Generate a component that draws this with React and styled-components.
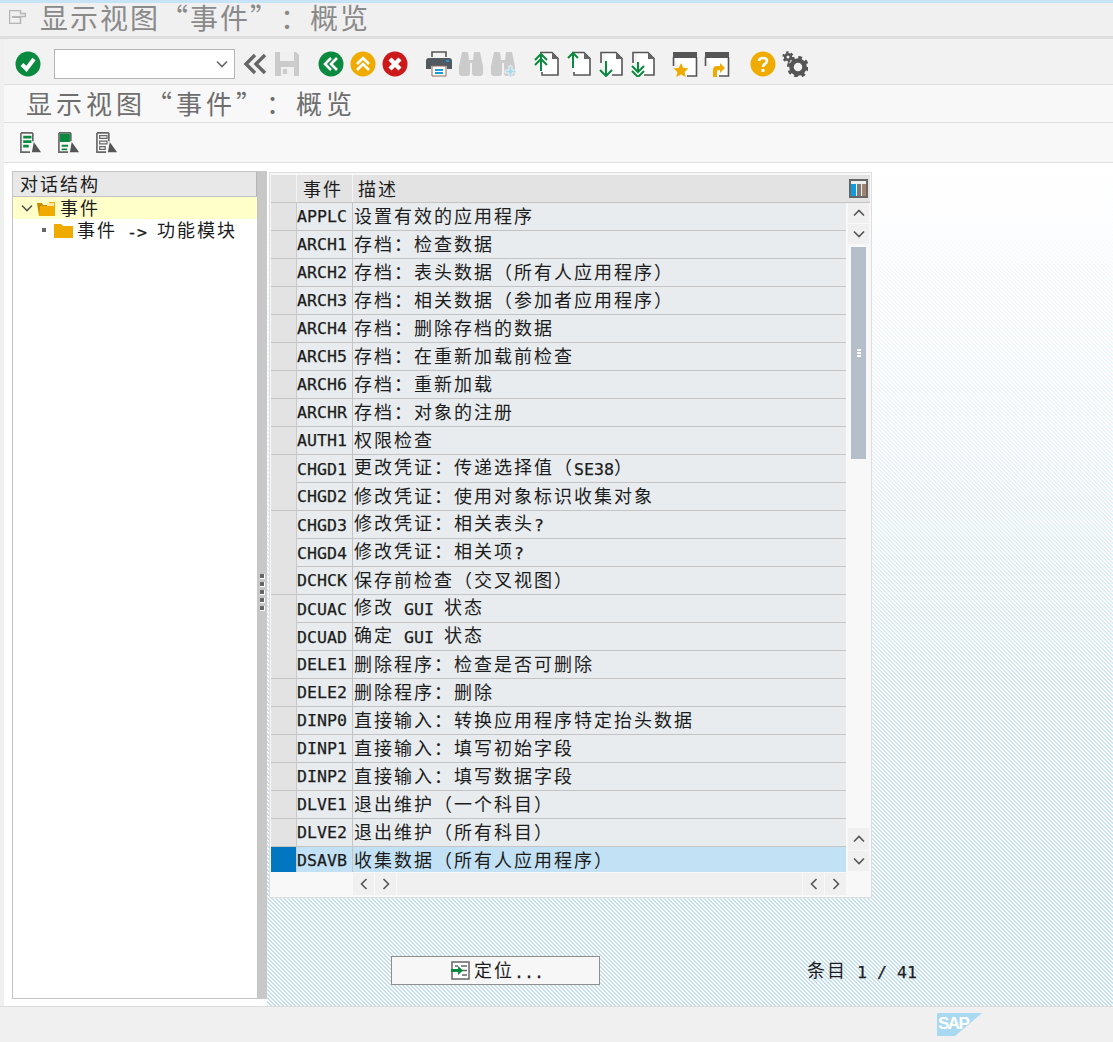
import React from 'react';
import styled, { createGlobalStyle } from 'styled-components';

const GlobalStyle = createGlobalStyle`
  *, *::before, *::after { box-sizing: border-box; }
  html, body { margin: 0; padding: 0; background: #f0f0f0; }
  body {
    font-family: "Noto Sans CJK SC", "Noto Sans", sans-serif;
    color: #1c1c1c;
    text-spacing-trim: space-all;
  }
`;

const Page = styled.div`
  width: 1113px;
  height: 1042px;
  display: flex;
  flex-direction: column;
  overflow: hidden;
  background: #f0f0f0;
`;

const TopStrip = styled.div`
  height: 3px;
  flex: none;
  background: #c6e4f6;
`;

const TitleBar = styled.div`
  height: 36px;
  flex: none;
  display: flex;
  align-items: center;
  padding: 0 0 6px 9px;
  gap: 14px;
  border-bottom: 3px solid #dedede;
`;

const BigTitle = styled.div`
  font-size: 28px;
  line-height: 26px;
  letter-spacing: 2px;
  color: #8a8a8a;
  white-space: pre;
`;

const Shell = styled.div`
  flex: 1;
  display: flex;
  flex-direction: column;
  margin-left: 4px;
  min-height: 0;
`;

const Toolbar = styled.div`
  height: 46px;
  flex: none;
  padding: 4px 0 0 8px;
  display: flex;
  align-items: center;
  border-bottom: 1px solid #dfdfdf;
  background: #f2f2f2;
`;

const ToolButton = styled.div`
  width: 32px;
  height: 32px;
  flex: none;
  display: flex;
  align-items: center;
  justify-content: center;
  margin-left: ${p => p.$gap || 0}px;
`;

const Combo = styled.div`
  width: 181px;
  height: 30px;
  flex: none;
  margin: 0 4px 0 10px;
  border: 1px solid #b5b5b5;
  background: #fff;
  display: flex;
  align-items: center;
  justify-content: flex-end;
  padding-right: 6px;
`;

const ScreenTitle = styled.div`
  height: 38px;
  flex: none;
  padding-left: 22px;
  font-size: 26px;
  line-height: 36px;
  letter-spacing: 4px;
  color: #6e6e6e;
  background: #f8f8f8;
  border-bottom: 1px solid #dfdfdf;
  white-space: pre;
`;

const AppToolbar = styled.div`
  height: 40px;
  flex: none;
  display: flex;
  align-items: center;
  padding-left: 16px;
  gap: 16px;
  background: #f8f8f8;
  border-bottom: 1px solid #dfdfdf;
`;

const Body = styled.div`
  flex: 1;
  display: flex;
  min-height: 0;
  background: #fff;
`;

const LeftColumn = styled.div`
  width: 263px;
  flex: none;
  padding: 8px 0 7px 8px;
  display: flex;
`;

const TreePanel = styled.div`
  width: 246px;
  border: 1px solid #c4c4c4;
  background: #fff;
`;

const TreeHeader = styled.div`
  height: 25px;
  padding: 0 0 2px 7px;
  display: flex;
  align-items: center;
  background: #e8e8e8;
  border-bottom: 1px solid #c4c4c4;
  border-right: 1px solid #b8b8b8;
`;

const TreeRow = styled.div`
  height: 22px;
  display: flex;
  align-items: center;
  padding-left: ${p => p.$indent}px;
  background: ${p => (p.$active ? '#ffffc9' : 'transparent')};
  gap: ${p => p.$gap || 0}px;
`;

const FolderSlot = styled.span`
  display: flex;
  margin-right: ${p => p.$space}px;
`;

const TreeLabel = styled.span`
  padding: ${p => (p.$raised ? '0 0 2px' : '1px 0 0')};
`;

const Splitter = styled.div`
  width: 9px;
  background: #c8c8c8;
  display: flex;
  flex-direction: column;
  align-items: center;
  justify-content: center;
  gap: 3px;
  padding-top: 14px;
`;

const GripDot = styled.span`
  width: 5px;
  height: 5px;
  background: #666;
  border: solid #fff;
  border-width: 0 1px 1px 0;
`;

const RightColumn = styled.div`
  flex: 1;
  padding: 9px 0 0 5px;
  display: flex;
  flex-direction: column;
  background:
    linear-gradient(to bottom, rgba(255,255,255,1) 0, rgba(255,255,255,.55) 40%, rgba(255,255,255,.2) 64%, rgba(255,255,255,0) 87%),
    linear-gradient(45deg, #c3dff2 25%, #fff 25%, #fff 50%, #c3dff2 50%, #c3dff2 75%, #fff 75%) 0 0 / 4px 4px;
`;

const TablePanel = styled.div`
  width: 603px;
  height: 726px;
  flex: none;
  margin-left: -3px;
  background: #f8f8f8;
  border: 1px solid #dedede;
  padding: 2px 1px 0 1px;
  display: flex;
  flex-direction: column;
`;

const HeaderRow = styled.div`
  height: 28px;
  flex: none;
  display: grid;
  grid-template-columns: 26px 56px 1fr 24px;
  background: #e3e3e3;
  border-bottom: 1px solid #c4c4c4;
`;

const HeaderCell = styled.div`
  display: flex;
  align-items: center;
  padding-left: ${p => p.$pad || 0}px;
  border-right: ${p => (p.$plain ? '0' : '1px solid #f4f4f4')};
`;

const TableMiddle = styled.div`
  flex: none;
  height: 669px;
  display: flex;
`;

const Rows = styled.div`
  width: 575px;
  flex: none;
  overflow: hidden;
`;

const Row = styled.div`
  height: 28px;
  display: grid;
  grid-template-columns: 26px 56px 1fr;
  background: ${p => (p.$selected ? '#c3e1f4' : '#e8ecef')};
  border-bottom: 1px solid ${p => (p.$selected ? '#c3e1f4' : '#c4c4c4')};
`;

const Selector = styled.div`
  background: ${p => (p.$selected ? '#0077c0' : '#e3e3e3')};
  border-right: 1px solid #c9c9c9;
`;

const KeyCell = styled.div`
  padding-bottom: 2px;
  display: flex;
  align-items: center;
  border-right: 1px solid #c4c4c4;
`;

const DescCell = styled.div`
  padding: 0 0 2px 1px;
  display: flex;
  align-items: center;
`;

const VScroll = styled.div`
  width: 21px;
  margin-left: 2px;
  display: flex;
  flex-direction: column;
`;

const ScrollButton = styled.div`
  width: 21px;
  height: ${p => p.$h || 20}px;
  flex: none;
  margin-bottom: 1px;
  background: #f0f0f0;
  display: flex;
  align-items: center;
  justify-content: center;
`;

const ScrollTrack = styled.div`
  flex: 1;
  padding: 2px 3px 0 3px;
`;

const ScrollThumb = styled.div`
  height: 212px;
  background: #b5bfc9;
  display: flex;
  align-items: center;
  justify-content: center;
`;

const ThumbGrip = styled.span`
  width: 4px;
  height: 8px;
  background: repeating-linear-gradient(to bottom, #fff 0, #fff 2px, #b5bfc9 2px, #b5bfc9 3px);
`;

const HScroll = styled.div`
  flex: none;
  height: 22px;
  margin: 1px 0 0 82px;
  width: 493px;
  display: flex;
  gap: 1px;
`;

const HTrack = styled.div`
  flex: 1;
  background: #f0f0f0;
`;

const BottomRow = styled.div`
  margin: 58px 0 0 119px;
  display: flex;
  align-items: center;
`;

const PositionButton = styled.div`
  width: 209px;
  height: 29px;
  flex: none;
  background: #f7f7f7;
  border: 1px solid #8f8f8f;
  display: flex;
  align-items: center;
  justify-content: center;
  gap: 4px;
  padding-left: 4px;
`;

const EntryInfo = styled.div`
  margin: 0 0 0 207px;
  display: flex;
  align-items: center;
`;

const Footer = styled.div`
  height: 36px;
  flex: none;
  border-top: 1px solid #dcdcdc;
  background: #f0f0f0;
  display: flex;
  padding: 6px 0 0 937px;
  margin-left: -4px;
`;

const Logo = styled.div`
  position: relative;
  width: 45px;
  height: 23px;
  color: #fff;
  font-family: "Liberation Sans", Arial, sans-serif;
  font-weight: 700;
  font-size: 17px;
  line-height: 21px;
  letter-spacing: -1.5px;
  padding-left: 1px;

  &::before {
    content: '';
    position: absolute;
    inset: 0;
    z-index: 0;
    background: #a9d9f0;
    clip-path: polygon(0 0, 100% 0, 40% 100%, 0 100%);
  }
`;

const LogoText = styled.span`
  position: relative;
  z-index: 1;
`;

const Line = styled.span`
  display: block;
  white-space: pre;
  line-height: 22px;
`;

const Han = styled.span`
  font-family: "Noto Sans CJK SC", sans-serif;
  font-size: 18px;
  letter-spacing: 2px;
`;

const Latin = styled.span`
  font-family: "DejaVu Sans Mono", monospace;
  font-size: 16.6px;
  -webkit-text-stroke: 0.25px currentColor;
  vertical-align: -1px;
`;

// half width runs sit on a 10px grid, full width runs on a 20px grid, like the SAP GUI font
const Text = ({ children }) => (
  <Line>
    {children.split(/([\x00-\x7f]+)/).filter(Boolean).map((part, i) =>
      /^[\x00-\x7f]/.test(part) ? <Latin key={i}>{part}</Latin> : <Han key={i}>{part}</Han>
    )}
  </Line>
);

const Circle = ({ fill, children }) => (
  <svg width="26" height="26" viewBox="0 0 26 26">
    <circle cx="13" cy="13" r="12.5" fill={fill} />
    {children}
  </svg>
);

const CheckIcon = () => (
  <Circle fill="#0a8a3e">
    <path d="M7 13.500l4.500 4.500L19 8" fill="none" stroke="#fff" strokeWidth="4" />
  </Circle>
);

const BackIcon = () => (
  <svg width="24" height="24" viewBox="0 0 24 24">
    <path d="M12 3L3 12l9 9M22 3l-9 9 9 9" fill="none" stroke="#666" strokeWidth="3.4" />
  </svg>
);

const SaveIcon = () => (
  <svg width="26" height="26" viewBox="0 0 26 26">
    <path d="M1 1h21l3 3v21H1z" fill="#cbcbcb" />
    <path d="M6 1h14v9H6z" fill="#f0f0f0" />
    <path d="M7 16h13v9H7z" fill="#f0f0f0" />
    <path d="M9 18h4v5H9z" fill="#cbcbcb" />
  </svg>
);

const LeftDouble = () => (
  <Circle fill="#0a8a3e">
    <path d="M13 7l-6 6 6 6M19 7l-6 6 6 6" fill="none" stroke="#fff" strokeWidth="2.6" />
  </Circle>
);

const UpDouble = () => (
  <Circle fill="#f0ab00">
    <path d="M7 13l6-6 6 6M7 19l6-6 6 6" fill="none" stroke="#fff" strokeWidth="2.6" />
  </Circle>
);

const CancelIcon = () => (
  <Circle fill="#cc1919">
    <path d="M8 8l10 10M18 8L8 18" fill="none" stroke="#fff" strokeWidth="4.4" />
  </Circle>
);

const PrintIcon = () => (
  <svg width="26" height="26" viewBox="0 0 26 26">
    <path d="M6 6V1h14v5" fill="none" stroke="#555" strokeWidth="1.6" />
    <path d="M0 10q0-3 3-3h20q3 0 3 3v8h-5v-3H5v3H0z" fill="#505a60" />
    <path d="M20 9h3v2h-3z" fill="#1b9ad6" />
    <path d="M6 15h14v10H6z" fill="#fff" stroke="#8a6a5a" />
    <path d="M9 18h8v2H9zM9 21h8v2H9z" fill="#1b9ad6" />
  </svg>
);

const FindIcon = ({ plus }) => (
  <svg width="26" height="26" viewBox="0 0 26 26">
    <path d="M4 1h6l1 8h4l1-8h6l3 14v7q0 3-3 3h-5q-3 0-3-3V12h-2v10q0 3-3 3H4q-3 0-3-3v-7z" fill="#cbcbcb" />
    {plus && <path d="M19 15h3v4h4v3h-4v4h-3v-4h-4v-3h4z" fill="#a9d9f0" stroke="#f2f2f2" strokeWidth="1" />}
  </svg>
);

const pageArrows = {
  first: 'M7 20V4M1 9l6-6 6 6M1 14l6-6 6 6',
  prev: 'M7 17V2M2 7l5-5 5 5',
  next: 'M8 10v15M2 19l6 6 6-6',
  last: 'M8 11v9M2 15l6 6 6-6M2 20l6 6 6-6',
};

const PageIcon = ({ arrow }) => {
  const goesUp = arrow === 'first' || arrow === 'prev';
  return (
    <svg width="26" height="26" viewBox="0 0 26 26">
      <path d="M5 2h13l6 6v16H7V2z" fill="#fff" />
      <path
        d={goesUp ? 'M6 1.500h12l6 6v16.500H8v-3' : 'M3 12V1.500h15l6 6v16.500H14'}
        fill="none"
        stroke="#555"
        strokeWidth="1.6"
      />
      <path d="M18 1l6 7h-6z" fill="#666" />
      <path d={pageArrows[arrow]} fill="none" stroke="#0a8a3e" strokeWidth="2" />
    </svg>
  );
};

const WindowIcon = ({ star }) => (
  <svg width="26" height="26" viewBox="0 0 26 26">
    <path d="M2 6h22v19H12" fill="#fff" />
    <path d="M1.500 6v9M24.500 6v19H15" fill="none" stroke="#555" strokeWidth="1.600" />
    <path d="M1 1h24v6H1z" fill="#555" />
    {star
      ? <path d="M9 12l2.200 4.800 5.300.6-3.900 3.500 1.100 5.100L9 23.400 4.300 26l1.100-5.100-3.900-3.500 5.300-.6z" fill="#f0ab00" />
      : <path d="M9 26h4v-5q0-2 2-2h1v3l5-5-5-5v3h-3q-4 0-4 4z" fill="#f0ab00" />}
  </svg>
);

const HelpIcon = () => (
  <svg width="26" height="26" viewBox="0 0 26 26">
    <circle cx="13" cy="13" r="12.5" fill="#f0ab00" />
    <path d="M9 10q0-3 4-3t4 3q0 2-2 3t-2 3" fill="none" stroke="#fff" strokeWidth="2.6" />
    <path d="M11.500 18h3v3h-3z" fill="#fff" />
  </svg>
);

const GearIcon = () => (
  <svg width="26" height="26" viewBox="0 0 26 26">
    <g fill="none" stroke="#555">
      <circle cx="16" cy="16" r="6.500" strokeWidth="4.500" />
      <circle cx="16" cy="16" r="9.500" strokeWidth="3" strokeDasharray="3.730 3.730" />
      <circle cx="6" cy="6" r="2.800" strokeWidth="2.600" />
      <circle cx="6" cy="6" r="4.700" strokeWidth="2" strokeDasharray="2.460 2.460" />
    </g>
  </svg>
);

const ChevronDown = ({ color = '#555' }) => (
  <svg width="12" height="8" viewBox="0 0 12 8">
    <path d="M1 1.500l5 5 5-5" fill="none" stroke={color} strokeWidth="1.600" />
  </svg>
);

const ChevronUp = () => (
  <svg width="12" height="8" viewBox="0 0 12 8">
    <path d="M1 6.500l5-5 5 5" fill="none" stroke="#555" strokeWidth="1.600" />
  </svg>
);

const ChevronLeft = () => (
  <svg width="8" height="12" viewBox="0 0 8 12">
    <path d="M6.500 1l-5 5 5 5" fill="none" stroke="#555" strokeWidth="1.600" />
  </svg>
);

const ChevronRight = () => (
  <svg width="8" height="12" viewBox="0 0 8 12">
    <path d="M1.500 1l5 5-5 5" fill="none" stroke="#555" strokeWidth="1.600" />
  </svg>
);

const TitleIcon = () => (
  <svg width="17" height="14" viewBox="0 0 17 14">
    <path d="M.5.500h11v3h5v3h-5v7H.500z" fill="none" stroke="#b5b5b5" strokeWidth="1.500" />
    <path d="M3 6h9v2H3z" fill="#b5b5b5" />
  </svg>
);

const SelectIcon = ({ variant }) => (
  <svg width="22" height="22" viewBox="0 0 24 24">
    <path d="M1 1h13M14 1v9M1 1v21h10" fill="none" stroke="#666" strokeWidth="1.800" />
    {variant === 'all' && <path d="M3.500 4h9v3h-9zM3.500 9h9v3h-9zM3.500 14h6v3h-6z" fill="#0a8a3e" />}
    {variant === 'block' && <path d="M2 2h11v9H2zM4 14h7v2H4zM4 18h6v2H4z" fill="#0a8a3e" />}
    {variant === 'none' && <path d="M4 4h8v3H4zM4 10h8v3H4zM4 16h6v3H4z" fill="none" stroke="#666" strokeWidth="1.300" />}
    <path d="M15 11l8 11H13z" fill="#555" />
  </svg>
);

const ColumnsIcon = () => (
  <svg width="19" height="19" viewBox="0 0 19 19">
    <path d="M0 0h19v19H0z" fill="#666" />
    <path d="M2 2h15v15H2z" fill="#eee" />
    <path d="M2 5h5v12H2z" fill="#0f9bdc" />
    <path d="M8 5h4v12H8z" fill="#7a7a7a" />
    <path d="M13 5h4v12h-4z" fill="#a0826d" />
  </svg>
);

const FolderOpen = () => (
  <svg width="18" height="15" viewBox="0 0 18 15">
    <path d="M0 2h5l1 2h6v11H2z" fill="#c98a00" />
    <path d="M3 5h9V1h6v14H2z" fill="#f0ab00" />
    <path d="M10 2h7v3h-7z" fill="#ffe9a8" />
  </svg>
);

const FolderClosed = () => (
  <svg width="19" height="15" viewBox="0 0 19 15">
    <path d="M0 1h7l2 2h10v12H0z" fill="#f0ab00" />
  </svg>
);

const SmallBullet = styled.span`
  width: 4px;
  height: 4px;
  background: #666;
  margin-right: 8px;
`;

const PositionIcon = () => (
  <svg width="19" height="19" viewBox="0 0 19 19">
    <path d="M1 1h17v17H1z" fill="#fff" stroke="#666" strokeWidth="1.500" />
    <path d="M4 5h3M10 5h6M11 14h5M11 9.500h5" stroke="#666" strokeWidth="1.500" />
    <path d="M0 8h7V5l5 4.500-5 4.500v-3H0z" fill="#0a8a3e" />
  </svg>
);

const rows = [
  ['APPLC', '设置有效的应用程序'],
  ['ARCH1', '存档：检查数据'],
  ['ARCH2', '存档：表头数据（所有人应用程序）'],
  ['ARCH3', '存档：相关数据（参加者应用程序）'],
  ['ARCH4', '存档：删除存档的数据'],
  ['ARCH5', '存档：在重新加载前检查'],
  ['ARCH6', '存档：重新加载'],
  ['ARCHR', '存档：对象的注册'],
  ['AUTH1', '权限检查'],
  ['CHGD1', '更改凭证：传递选择值（SE38）'],
  ['CHGD2', '修改凭证：使用对象标识收集对象'],
  ['CHGD3', '修改凭证：相关表头?'],
  ['CHGD4', '修改凭证：相关项?'],
  ['DCHCK', '保存前检查（交叉视图）'],
  ['DCUAC', '修改 GUI 状态'],
  ['DCUAD', '确定 GUI 状态'],
  ['DELE1', '删除程序：检查是否可删除'],
  ['DELE2', '删除程序：删除'],
  ['DINP0', '直接输入：转换应用程序特定抬头数据'],
  ['DINP1', '直接输入：填写初始字段'],
  ['DINP2', '直接输入：填写数据字段'],
  ['DLVE1', '退出维护（一个科目）'],
  ['DLVE2', '退出维护（所有科目）'],
  ['DSAVB', '收集数据（所有人应用程序）'],
];

export default function App() {
  return (
    <Page>
      <GlobalStyle />
      <TopStrip />
      <TitleBar>
        <TitleIcon />
        <BigTitle>显示视图“事件”：概览</BigTitle>
      </TitleBar>
      <Shell>
        <Toolbar>
          <ToolButton><CheckIcon /></ToolButton>
          <Combo><ChevronDown color="#666" /></Combo>
          <ToolButton><BackIcon /></ToolButton>
          <ToolButton><SaveIcon /></ToolButton>
          <ToolButton $gap={12}><LeftDouble /></ToolButton>
          <ToolButton><UpDouble /></ToolButton>
          <ToolButton><CancelIcon /></ToolButton>
          <ToolButton $gap={12}><PrintIcon /></ToolButton>
          <ToolButton><FindIcon /></ToolButton>
          <ToolButton><FindIcon plus /></ToolButton>
          <ToolButton $gap={12}><PageIcon arrow="first" /></ToolButton>
          <ToolButton><PageIcon arrow="prev" /></ToolButton>
          <ToolButton><PageIcon arrow="next" /></ToolButton>
          <ToolButton><PageIcon arrow="last" /></ToolButton>
          <ToolButton $gap={10}><WindowIcon star /></ToolButton>
          <ToolButton><WindowIcon /></ToolButton>
          <ToolButton $gap={14}><HelpIcon /></ToolButton>
          <ToolButton><GearIcon /></ToolButton>
        </Toolbar>
        <ScreenTitle>显示视图“事件”：概览</ScreenTitle>
        <AppToolbar>
          <SelectIcon variant="all" />
          <SelectIcon variant="block" />
          <SelectIcon variant="none" />
        </AppToolbar>
        <Body>
          <LeftColumn>
            <TreePanel>
              <TreeHeader><Text>对话结构</Text></TreeHeader>
              <TreeRow $active $indent={8} $gap={4}>
                <ChevronDown />
                <FolderSlot $space={1}><FolderOpen /></FolderSlot>
                <TreeLabel $raised><Text>事件</Text></TreeLabel>
              </TreeRow>
              <TreeRow $indent={29}>
                <SmallBullet />
                <FolderSlot $space={4}><FolderClosed /></FolderSlot>
                <TreeLabel><Text>事件 -> 功能模块</Text></TreeLabel>
              </TreeRow>
            </TreePanel>
            <Splitter>
              <GripDot /><GripDot /><GripDot /><GripDot /><GripDot />
            </Splitter>
          </LeftColumn>
          <RightColumn>
            <TablePanel>
              <HeaderRow>
                <HeaderCell />
                <HeaderCell $pad={6}><Text>事件</Text></HeaderCell>
                <HeaderCell $pad={5} $plain><Text>描述</Text></HeaderCell>
                <HeaderCell $pad={3} $plain><ColumnsIcon /></HeaderCell>
              </HeaderRow>
              <TableMiddle>
                <Rows>
                  {rows.map(([key, desc]) => (
                    <Row key={key} $selected={key === 'DSAVB'}>
                      <Selector $selected={key === 'DSAVB'} />
                      <KeyCell><Text>{key}</Text></KeyCell>
                      <DescCell><Text>{desc}</Text></DescCell>
                    </Row>
                  ))}
                </Rows>
                <VScroll>
                  <ScrollButton><ChevronUp /></ScrollButton>
                  <ScrollButton><ChevronDown /></ScrollButton>
                  <ScrollTrack>
                    <ScrollThumb><ThumbGrip /></ScrollThumb>
                  </ScrollTrack>
                  <ScrollButton $h={22}><ChevronUp /></ScrollButton>
                  <ScrollButton $h={20}><ChevronDown /></ScrollButton>
                </VScroll>
              </TableMiddle>
              <HScroll>
                <ScrollButton $h={22}><ChevronLeft /></ScrollButton>
                <ScrollButton $h={22}><ChevronRight /></ScrollButton>
                <HTrack />
                <ScrollButton $h={22}><ChevronLeft /></ScrollButton>
                <ScrollButton $h={22}><ChevronRight /></ScrollButton>
              </HScroll>
            </TablePanel>
            <BottomRow>
              <PositionButton>
                <PositionIcon />
                <Text>定位...</Text>
              </PositionButton>
              <EntryInfo><Text>条目 1 / 41</Text></EntryInfo>
            </BottomRow>
          </RightColumn>
        </Body>
        <Footer><Logo><LogoText>SAP</LogoText></Logo></Footer>
      </Shell>
    </Page>
  );
}
